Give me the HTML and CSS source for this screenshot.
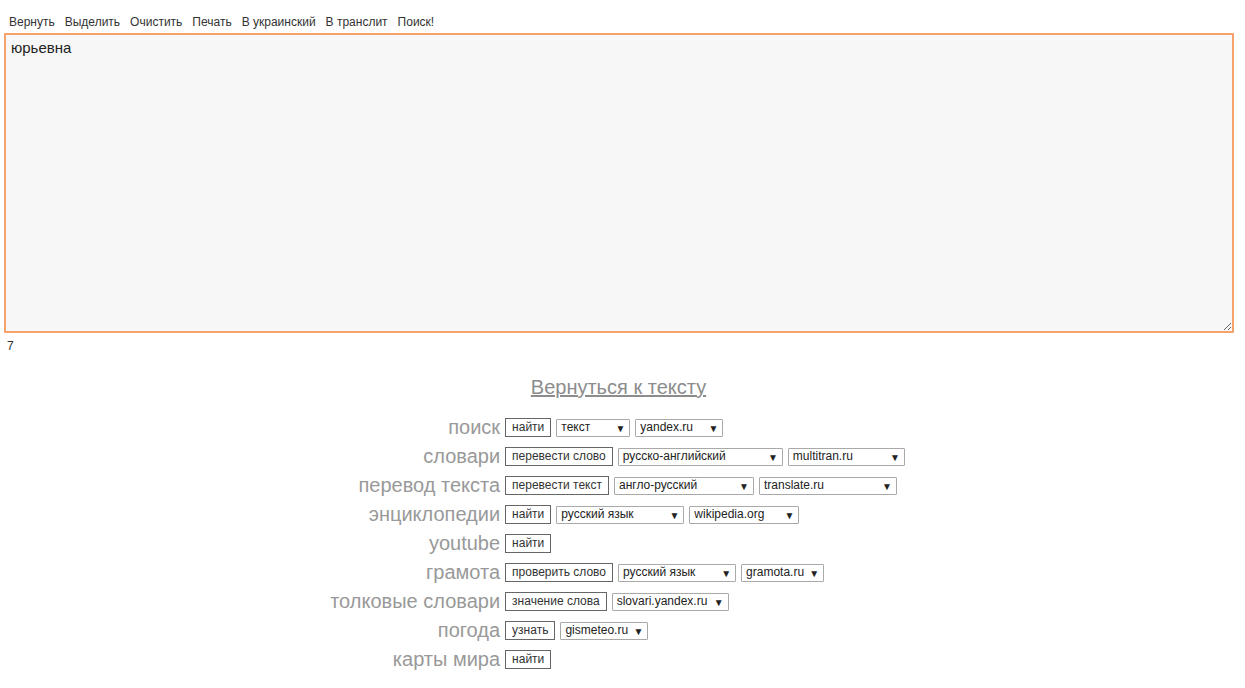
FILE: index.html
```html
<!DOCTYPE html>
<html lang="ru">
<head>
  <meta charset="UTF-8">
  <title>Текст</title>
  <link rel="stylesheet" href="styles.css">
</head>
<body>
  <div class="toolbar">
    <a href="#" class="tool">Вернуть</a>
    <a href="#" class="tool">Выделить</a>
    <a href="#" class="tool">Очистить</a>
    <a href="#" class="tool">Печать</a>
    <a href="#" class="tool">В украинский</a>
    <a href="#" class="tool">В транслит</a>
    <a href="#" class="tool">Поиск!</a>
  </div>
  <textarea class="editor">юрьевна</textarea>
  <div class="counter">7</div>

  <div class="back"><a href="#" class="back-link">Вернуться к тексту</a></div>

  <div class="services">
    <div class="label">поиск</div>
    <div class="controls">
      <span class="btn">найти</span>
      <span class="sel w74">текст</span>
      <span class="sel w88">yandex.ru</span>
    </div>

    <div class="label">словари</div>
    <div class="controls">
      <span class="btn">перевести слово</span>
      <span class="sel w165">русско-английский</span>
      <span class="sel w117">multitran.ru</span>
    </div>

    <div class="label">перевод текста</div>
    <div class="controls">
      <span class="btn">перевести текст</span>
      <span class="sel w140">англо-русский</span>
      <span class="sel w138">translate.ru</span>
    </div>

    <div class="label">энциклопедии</div>
    <div class="controls">
      <span class="btn">найти</span>
      <span class="sel w128">русский язык</span>
      <span class="sel w110">wikipedia.org</span>
    </div>

    <div class="label">youtube</div>
    <div class="controls">
      <span class="btn">найти</span>
    </div>

    <div class="label">грамота</div>
    <div class="controls">
      <span class="btn">проверить слово</span>
      <span class="sel w118">русский язык</span>
      <span class="sel w83">gramota.ru</span>
    </div>

    <div class="label">толковые словари</div>
    <div class="controls">
      <span class="btn">значение слова</span>
      <span class="sel w117">slovari.yandex.ru</span>
    </div>

    <div class="label">погода</div>
    <div class="controls">
      <span class="btn">узнать</span>
      <span class="sel w88">gismeteo.ru</span>
    </div>

    <div class="label">карты мира</div>
    <div class="controls">
      <span class="btn">найти</span>
    </div>
  </div>
</body>
</html>
```

FILE: styles.css
```css
body {
  margin: 0;
  padding: 0 12px 0 4px;
  font-family: Arial, 'Liberation Sans', sans-serif;
  font-size: 12px;
  color: #333;
  background: #fff;
}
.toolbar {
  display: flex;
  gap: 10px;
  padding: 15px 0 4px 5px;
  line-height: 14px;
}
.tool {
  color: #333;
  text-decoration: none;
}
.editor {
  display: block;
  box-sizing: border-box;
  width: 1230px;
  height: 300px;
  margin: 0;
  padding: 4px 5px;
  border: 2px solid #f7a26a;
  border-radius: 1px;
  outline: none;
  background: #f7f7f7;
  font-family: Arial, 'Liberation Sans', sans-serif;
  font-size: 15px;
  line-height: 18px;
  color: #222;
}
.counter {
  padding: 6px 0 0 3px;
  line-height: 14px;
  color: #333;
}
.back {
  text-align: center;
  padding-top: 22px;
}
.back-link {
  font-size: 20px;
  line-height: 24px;
  color: #8c8c8c;
  text-decoration: underline;
}
.services {
  display: grid;
  grid-template-columns: auto auto;
  justify-content: center;
  column-gap: 5px;
  margin-top: 14px;
  margin-left: -2px;
}
.label {
  text-align: right;
  font-size: 20px;
  line-height: 29px;
  color: #999;
}
.controls {
  display: flex;
  align-items: center;
  gap: 5px;
}
.btn {
  box-sizing: border-box;
  height: 19px;
  padding: 0 6px;
  border: 1px solid #666;
  background: #fff;
  font-size: 12px;
  line-height: 17px;
  color: #333;
}
.sel {
  position: relative;
  box-sizing: border-box;
  height: 18px;
  padding: 0 0 0 4px;
  border: 1px solid #a9a9a9;
  border-radius: 1px;
  background: #fff;
  font-size: 12px;
  line-height: 15px;
  color: #222;
}
.sel::after {
  content: "\25BC";
  position: absolute;
  right: 4px;
  top: 1px;
  font-size: 10px;
  color: #222;
}
.w74 { width: 74px; }
.w83 { width: 83px; }
.w88 { width: 88px; }
.w110 { width: 110px; }
.w117 { width: 117px; }
.w118 { width: 118px; }
.w128 { width: 128px; }
.w138 { width: 138px; }
.w140 { width: 140px; }
.w165 { width: 165px; }
```
